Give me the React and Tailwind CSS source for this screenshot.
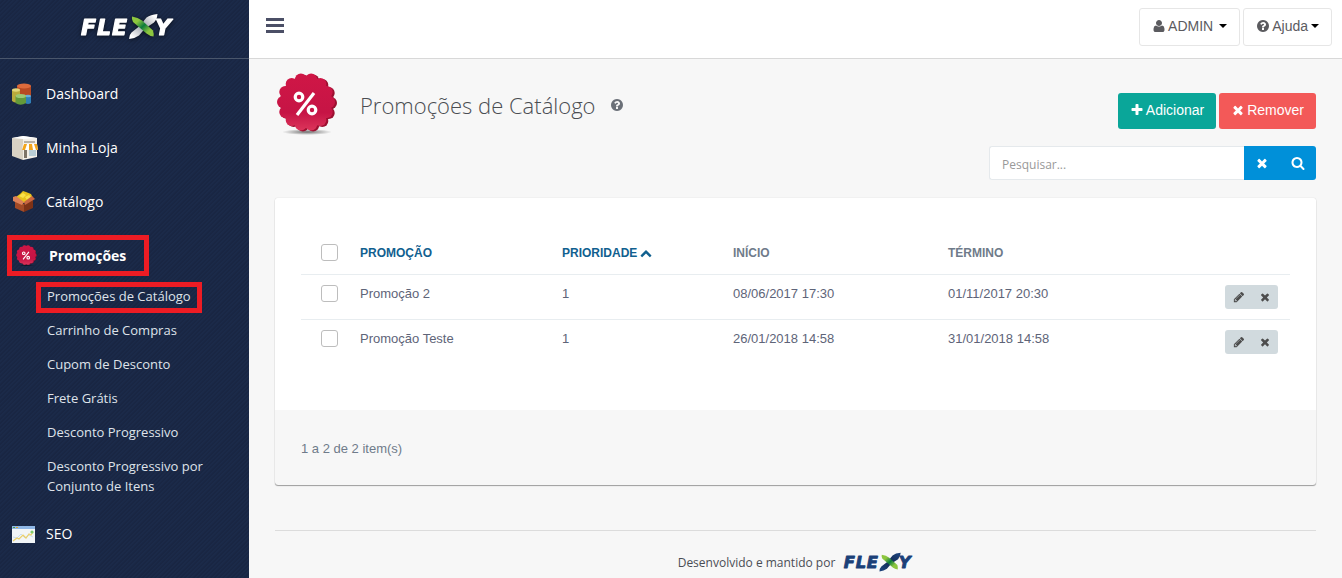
import { useState } from 'react';
import clsx from 'clsx';

const ICONS = {
  times: 'M1490 1322q0 40-28 68l-136 136q-28 28-68 28t-68-28l-294-294-294 294q-28 28-68 28t-68-28l-136-136q-28-28-28-68t28-68l294-294-294-294q-28-28-28-68t28-68l136-136q28-28 68-28t68 28l294 294 294-294q28-28 68-28t68 28l136 136q28 28 28 68t-28 68l-294 294 294 294q28 28 28 68z',
  plus: 'M1600 736v192q0 40-28 68t-68 28h-416v416q0 40-28 68t-68 28h-192q-40 0-68-28t-28-68v-416h-416q-40 0-68-28t-28-68v-192q0-40 28-68t68-28h416v-416q0-40 28-68t68-28h192q40 0 68 28t28 68v416h416q40 0 68 28t28 68z',
  search: 'M1216 832q0-185-131.5-316.5t-316.5-131.5-316.5 131.5-131.5 316.5 131.5 316.5 316.5 131.5 316.5-131.5 131.5-316.5zm512 832q0 52-38 90t-90 38q-54 0-90-38l-343-342q-179 124-399 124-143 0-273.5-55.5t-225-150-150-225-55.5-273.5 55.5-273.5 150-225 225-150 273.5-55.5 273.5 55.5 225 150 150 225 55.5 273.5q0 220-124 399l343 343q37 37 37 90z',
  question: 'M1024 1376v-192q0-14-9-23t-23-9h-192q-14 0-23 9t-9 23v192q0 14 9 23t23 9h192q14 0 23-9t9-23zm256-672q0-88-55.5-163t-138.5-116-170-41q-243 0-371 213-15 24 8 42l132 100q7 6 19 6 16 0 25-12 53-68 86-92 34-24 86-24 48 0 85.5 26t37.5 59q0 38-20 61t-68 45q-63 28-115.5 86.5t-52.500 125.500v36q0 14 9 23t23 9h192q14 0 23-9t9-23q0-19 21.5-49.5t54.5-49.5q32-18 49-28.5t46-35 44.5-48 28-60.5 12.5-81zm384 192q0 209-103 385.5t-279.5 279.5-385.5 103-385.5-103-279.5-279.5-103-385.5 103-385.5 279.5-279.5 385.5-103 385.5 103 279.5 279.5 103 385.5z',
  user: 'M1600 1405q0 120-73 189.5t-194 69.5h-874q-121 0-194-69.5t-73-189.5q0-53 3.5-103.5t14-109 26.5-108.5 43-97.5 62-81 85.5-53.5 111.5-20q9 0 42 21.5t74.5 48 108 48 133.5 21.5 133.5-21.5 108-48 74.5-48 42-21.5q61 0 111.5 20t85.5 53.5 62 81 43 97.5 26.5 108.5 14 109 3.5 103.5zm-320-893q0 159-112.5 271.5t-271.5 112.5-271.5-112.5-112.5-271.5 112.5-271.5 271.5-112.5 271.5 112.5 112.5 271.5z',
  pencil: 'M491 1536l91-91-235-235-91 91v107h128v128h107zm523-928q0-22-22-22-10 0-17 7l-542 542q-7 7-7 17 0 22 22 22 10 0 17-7l542-542q7-7 7-17zm-54-192l416 416-832 832h-416v-416zm683 96q0 53-37 90l-166 166-416-416 166-165q36-38 90-38 53 0 91 38l235 234q37 39 37 91z',
  up: 'M1683 1331l-166 165q-19 19-45 19t-45-19l-531-531-531 531q-19 19-45 19t-45-19l-166-165q-19-19-19-45.5t19-45.5l742-741q19-19 45-19t45 19l742 741q19 19 19 45.5t-19 45.5z',
};

function Icon({ name, size = 14, className }) {
  return (
    <svg width={size} height={size} viewBox="0 0 1792 1792" fill="currentColor" aria-hidden="true" className={clsx('shrink-0', className)}>
      <path d={ICONS[name]} />
    </svg>
  );
}

function Caret() {
  return (
    <svg width="8" height="4" viewBox="0 0 8 4" aria-hidden="true" className="shrink-0">
      <path d="M0 0h8L4 4z" fill="#000" />
    </svg>
  );
}

function Logo({ dark = false, className }) {
  const id = dark ? 'logo-dark' : 'logo-light';
  const ink = dark ? '#1b4078' : '#fff';
  return (
    <svg viewBox="0 0 94 28" role="img" aria-label="Flexy" className={className}>
      <defs>
        <linearGradient id={`${id}-g`} x1="0" y1="0" x2="1" y2="1">
          <stop offset="0.25" stopColor="#8dc63f" />
          <stop offset="0.5" stopColor="#0b7a3b" />
          <stop offset="0.75" stopColor="#8dc63f" />
        </linearGradient>
        <linearGradient id={`${id}-s`} x1="0" y1="1" x2="1" y2="0">
          <stop offset="0.1" stopColor={ink} />
          <stop offset="0.5" stopColor={dark ? '#122a52' : '#9a9fa8'} />
          <stop offset="0.9" stopColor={ink} />
        </linearGradient>
      </defs>
      <g
        fill={ink}
        stroke={ink}
        strokeWidth="1.2"
        strokeLinejoin="round"
        fontFamily="'DejaVu Sans', sans-serif"
        fontWeight="700"
        fontStyle="italic"
        fontSize="22"
      >
        <text x="1" y="22">F</text>
        <text x="17" y="22">L</text>
        <text x="32" y="22">E</text>
        <text x="75" y="22">Y</text>
      </g>
      <path d="M77.500 1q-7 .5-11 3.500-2 2-5 7l-10 8q-2.500 2.500-2.500 6.500 6-.5 10-3.500l6-7 9-6q3-3 3.500-8.500z" fill={`url(#${id}-s)`} />
      <path d="M52 3.500q6 1 10 4l11 10q1 3 .5 6-4-.5-7-3L53 9q-1.500-2.500-1-5.500z" fill={`url(#${id}-g)`} />
    </svg>
  );
}

const SCALLOPS = Array.from({ length: 14 }, (_, i) => {
  const a = (i / 14) * Math.PI * 2;
  return { x: 29 + Math.cos(a) * 23, y: 29 + Math.sin(a) * 23 };
});

function PromoBadge({ id, className }) {
  return (
    <svg viewBox="0 0 60 64" aria-hidden="true" className={className}>
      <defs>
        <linearGradient id={id} gradientUnits="userSpaceOnUse" x1="0" y1="2" x2="0" y2="60">
          <stop offset="0" stopColor="#cf1646" />
          <stop offset="0.65" stopColor="#c61445" />
          <stop offset="1" stopColor="#df3a5e" />
        </linearGradient>
        <radialGradient id={`${id}-sh`}>
          <stop offset="0" stopColor="#000" stopOpacity="0.55" />
          <stop offset="1" stopColor="#000" stopOpacity="0" />
        </radialGradient>
      </defs>
      <ellipse cx="30" cy="59" rx="25" ry="3" fill={`url(#${id}-sh)`} />
      <g fill="#9c1030">
        <circle cx="31" cy="30" r="26" />
        {SCALLOPS.map((p, i) => <circle key={i} cx={p.x + 2} cy={p.y + 1} r="6" />)}
      </g>
      <g fill={`url(#${id})`}>
        <circle cx="29" cy="29" r="26" />
        {SCALLOPS.map((p, i) => <circle key={i} cx={p.x} cy={p.y} r="6" />)}
      </g>
      <g fill="none" stroke="#fff" strokeWidth="3.2">
        <circle cx="22" cy="24" r="3.8" />
        <circle cx="35" cy="37" r="3.8" />
        <path d="M37 20L20 42" />
      </g>
    </svg>
  );
}

function DashboardIcon() {
  return (
    <svg width="20" height="23" viewBox="0 0 20 23" aria-hidden="true">
      <path d="M5 3v12h14V3z" fill="#b84a22" />
      <ellipse cx="12" cy="3" rx="7" ry="2.5" fill="#dd6b3c" />
      <path d="M13 13v7q3 2 6 0v-7z" fill="#2f7fb8" />
      <ellipse cx="16" cy="13" rx="3" ry="1.3" fill="#6aaed8" />
      <path d="M0 7v11q4 3 8 0V7z" fill="#b9ab3c" />
      <ellipse cx="4" cy="7" rx="4" ry="1.7" fill="#e3d77a" />
      <path d="M3.500 13v7q5 3.500 10.500 0v-7z" fill="#649a3a" />
      <ellipse cx="8.800" cy="13" rx="5.200" ry="2" fill="#9cc874" />
    </svg>
  );
}

function StoreIcon() {
  return (
    <svg width="26" height="24" viewBox="0 0 26 24" aria-hidden="true">
      <path d="M0 2L11 0v24L0 20z" fill="#d9d2c4" />
      <path d="M11 0l14 2v19l-14 3z" fill="#f3efe8" />
      <path d="M0 2L11 0l14 2-14 1z" fill="#fff" />
      <rect x="12" y="5" width="11" height="2" fill="#b9b2a5" />
      <rect x="12" y="14" width="3" height="8" fill="#7d7468" />
      <rect x="17" y="14" width="7" height="6" fill="#b9cdd6" />
      <path d="M11 8h14l1 6H10z" fill="#fff" />
      <path d="M12 8h3l-2 6h-3zM17 8h3l1 6h-4zM22 8h3l1 6h-2z" fill="#f3a51c" />
    </svg>
  );
}

function BoxIcon() {
  return (
    <svg width="24" height="22" viewBox="0 0 24 22" aria-hidden="true">
      <path d="M3 9l9 4v8l-9-4z" fill="#a24a26" />
      <path d="M21 9l-9 4v8l9-4z" fill="#7e3216" />
      <path d="M4 6l4-3 3-3 3 1 5 2 2 4-9 5-8-4z" fill="#e8c21c" />
      <path d="M7 5l4-3 3 2-3 3zM13 6l4-2 2 2-4 3z" fill="#f9e04a" />
      <path d="M1 6l3-1 8 6-2 3-9-4z" fill="#dd8158" />
      <path d="M20 5l3 3-10 6-1-3z" fill="#c86640" />
    </svg>
  );
}

function SeoIcon() {
  return (
    <svg width="23" height="17" viewBox="0 0 23 17" aria-hidden="true">
      <rect width="23" height="17" fill="#f2f5f7" />
      <rect width="23" height="3" fill="#8fb7e6" />
      <path d="M1 1h2v1H1z" fill="#4b9b4b" />
      <path d="M4 1h2v1H4z" fill="#e0a32a" />
      <path d="M1 11l4 1 4-4 4 4 4-3 4 2" fill="none" stroke="#c9deef" strokeWidth="1" />
      <path d="M1 15l4-3 2 1 4-4 3 3 3-4 2 1 2-3" fill="none" stroke="#ecd06a" strokeWidth="1.2" />
      <circle cx="20" cy="6" r="1.6" fill="#7fcb6a" />
    </svg>
  );
}

const SUBMENU = [
  'Carrinho de Compras',
  'Cupom de Desconto',
  'Frete Grátis',
  'Desconto Progressivo',
  'Desconto Progressivo por Conjunto de Itens',
];

const PROMOTIONS = [
  { id: 1, name: 'Promoção 2', priority: 1, start: '08/06/2017 17:30', end: '01/11/2017 20:30' },
  { id: 2, name: 'Promoção Teste', priority: 1, start: '26/01/2018 14:58', end: '31/01/2018 14:58' },
];

function NavItem({ icon, label }) {
  return (
    <li>
      <a href="#" className="flex h-[54px] items-center pl-3 text-sm text-white">
        <span className="w-[34px] shrink-0">{icon}</span>
        {label}
      </a>
    </li>
  );
}

function Sidebar() {
  return (
    <aside className="w-[249px] shrink-0 bg-[#1a2846] bg-[repeating-linear-gradient(135deg,#1b2a49_0px,#1b2a49_1px,#192643_2px,#192643_3px)] font-['Open_Sans',sans-serif]">
      <div className="flex h-[59px] justify-center border-b border-[#4a566b] pt-[13px] pl-1">
        <Logo className="h-7 w-[94px] drop-shadow-[0_1px_2px_rgba(0,0,0,0.6)]" />
      </div>
      <nav className="pt-2">
        <ul>
          <NavItem icon={<DashboardIcon />} label="Dashboard" />
          <NavItem icon={<StoreIcon />} label="Minha Loja" />
          <NavItem icon={<BoxIcon />} label="Catálogo" />
          <li>
            <div className="flex h-[54px] items-center pb-px pl-[7px]">
              <a href="#" className="flex h-[41px] w-[142px] items-center border-[5px] border-[#ed1c24] pl-1 text-sm font-bold text-white">
                <span className="w-[33px] shrink-0"><PromoBadge id="badge-sm" className="h-[22px] w-[21px]" /></span>
                Promoções
              </a>
            </div>
            <ul className="-mt-1 mb-1 pr-9 text-[13px] leading-5 text-[#dfe3ea]">
              <li className="flex h-[34px] items-end pl-9">
                <a href="#" className="flex h-[31px] w-[166px] items-center border-[5px] border-[#ed1c24] pb-[3px] pl-[6px] whitespace-nowrap">
                  Promoções de Catálogo
                </a>
              </li>
              {SUBMENU.map(label => (
                <li key={label}>
                  <a href="#" className="block py-[7px] pl-[47px]">{label}</a>
                </li>
              ))}
            </ul>
          </li>
          <NavItem icon={<SeoIcon />} label="SEO" />
        </ul>
      </nav>
    </aside>
  );
}

function Topbar() {
  return (
    <header className="flex h-[59px] items-start justify-between border-b border-[#d8d8d8] bg-white pt-2 pr-[10px] pl-[17px]">
      <button type="button" aria-label="Menu" className="mt-[10px] flex w-[18px] flex-col gap-[3px]">
        <span className="h-[3px] bg-[#4b4f66]" />
        <span className="h-[3px] bg-[#4b4f66]" />
        <span className="h-[3px] bg-[#4b4f66]" />
      </button>
      <div className="flex gap-[3px] text-sm text-[#5b5b5f]">
        <button type="button" className="flex h-[38px] items-center rounded-[3px] border border-[#e6e6e6] px-3 pb-[2px]">
          <Icon name="user" className="mr-[2px]" />
          <span className="mr-[6px]">ADMIN</span>
          <Caret />
        </button>
        <button type="button" className="flex h-[38px] items-center rounded-[3px] border border-[#e6e6e6] px-3 pb-[2px]">
          <Icon name="question" className="mr-[2px]" />
          <span className="mr-[3px]">Ajuda</span>
          <Caret />
        </button>
      </div>
    </header>
  );
}

function Checkbox({ label, ...props }) {
  return (
    <input
      type="checkbox"
      aria-label={label}
      className="block size-[17px] appearance-none rounded-[3px] border border-[#bdbdbd] bg-white checked:bg-[#0090d9]"
      {...props}
    />
  );
}

function PromotionsTable() {
  const [selected, setSelected] = useState([]);
  const allSelected = selected.length === PROMOTIONS.length;

  function toggle(id) {
    setSelected(s => (s.includes(id) ? s.filter(x => x !== id) : [...s, id]));
  }

  return (
    <table className="w-full table-fixed text-left text-[13px] leading-[18px] text-[#5e6478]">
      <thead>
        <tr className="h-[42px] border-b border-[#e8edf0] text-xs text-[#6f7b8a]">
          <th className="w-[39px] pl-5">
            <Checkbox label="Selecionar todos" checked={allSelected} onChange={() => setSelected(allSelected ? [] : PROMOTIONS.map(p => p.id))} />
          </th>
          <th className="w-[202px] pl-5"><a href="#" className="text-[#11608f]">PROMOÇÃO</a></th>
          <th className="w-[171px] pl-5">
            <a href="#" className="flex items-center gap-[3px] text-[#11608f]">PRIORIDADE <Icon name="up" size={12} /></a>
          </th>
          <th className="w-[215px] pl-5">INÍCIO</th>
          <th className="pl-5">TÉRMINO</th>
          <th className="w-[85px]" aria-label="Ações" />
        </tr>
      </thead>
      <tbody>
        {PROMOTIONS.map(p => (
          <tr key={p.id} className="h-[45px] border-b border-[#e8edf0] align-top last:border-0">
            <td className="pt-[10px] pl-5">
              <Checkbox label={`Selecionar ${p.name}`} checked={selected.includes(p.id)} onChange={() => toggle(p.id)} />
            </td>
            <td className="pt-[10px] pl-5">{p.name}</td>
            <td className="pt-[10px] pl-5">{p.priority}</td>
            <td className="pt-[10px] pl-5">{p.start}</td>
            <td className="pt-[10px] pl-5">{p.end}</td>
            <td className="pt-[10px] pr-3">
              <div className="flex justify-end text-[#4d4d4d]">
                <button type="button" aria-label="Editar" className="flex h-6 w-[27px] items-center justify-center rounded-l-[3px] bg-[#d1dade]">
                  <Icon name="pencil" size={12} />
                </button>
                <button type="button" aria-label="Remover" className="flex h-6 w-[26px] items-center justify-center rounded-r-[3px] bg-[#d1dade]">
                  <Icon name="times" size={12} />
                </button>
              </div>
            </td>
          </tr>
        ))}
      </tbody>
    </table>
  );
}

export default function App() {
  const [query, setQuery] = useState('');

  return (
    <div className="flex min-h-screen bg-[#f7f7f7] font-['Liberation_Sans',Arial,sans-serif]">
      <Sidebar />
      <div className="min-w-0 flex-1">
        <Topbar />
        <main className="px-[26px]">
          <div className="flex justify-between pt-[13px]">
            <div className="flex h-[66px] items-center">
              <PromoBadge id="badge-lg" className="ml-[2px] h-16 w-[60px]" />
              <h1 className="ml-[23px] font-['Open_Sans',sans-serif] text-[22px] font-light text-[#4a4d52]">Promoções de Catálogo</h1>
              <Icon name="question" className="ml-[14px] text-[#6b7078]" />
            </div>
            <div className="flex flex-col items-end gap-[17px] pt-[21px]">
              <div className="flex gap-[3px] text-sm text-white">
                <button type="button" className="flex h-9 items-center gap-[2px] rounded-[3px] bg-[#0aa699] px-3 pb-[2px]">
                  <Icon name="plus" /> Adicionar
                </button>
                <button type="button" className="flex h-9 items-center gap-[2px] rounded-[3px] bg-[#f35958] px-3 pb-[2px]">
                  <Icon name="times" /> Remover
                </button>
              </div>
              <form className="flex" onSubmit={e => e.preventDefault()}>
                <input
                  type="text"
                  aria-label="Pesquisar"
                  value={query}
                  onChange={e => setQuery(e.target.value)}
                  placeholder="Pesquisar..."
                  className="h-[34px] w-[255px] rounded-l-[3px] border border-r-0 border-[#e5e9ec] bg-white px-3 pt-[2px] font-['Open_Sans',sans-serif] text-xs text-[#555] placeholder:text-[#999]"
                />
                <button type="button" aria-label="Limpar" onClick={() => setQuery('')} className="flex h-[34px] w-9 items-center justify-center bg-[#0090d9] text-white">
                  <Icon name="times" />
                </button>
                <button type="submit" aria-label="Buscar" className="flex h-[34px] w-9 items-center justify-center rounded-r-[3px] bg-[#0090d9] text-white">
                  <Icon name="search" />
                </button>
              </form>
            </div>
          </div>

          <section className="mt-[18px] rounded-[3px] shadow-[0_1px_1px_rgba(0,0,0,0.35),0_0_1px_rgba(0,0,0,0.25)]">
            <div className="rounded-t-[3px] bg-white px-[26px] pt-[34px] pb-[46px]">
              <PromotionsTable />
            </div>
            <p className="px-[26px] pt-[29px] pb-[26px] text-[13px] leading-5 text-[#6f7b8a]">1 a 2 de 2 item(s)</p>
          </section>

          <footer className="mt-[45px] flex items-center justify-center gap-2 border-t border-[#dcdcdc] pt-[21px] pb-1 font-['Open_Sans',sans-serif] text-xs text-[#4a4d55]">
            Desenvolvido e mantido por
            <Logo dark className="h-[21px] w-[70px]" />
          </footer>
        </main>
      </div>
    </div>
  );
}
